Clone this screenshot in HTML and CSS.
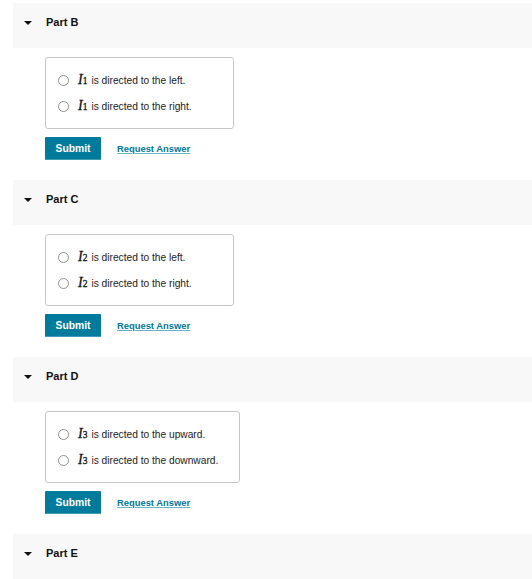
FILE: index.html
```html
<!DOCTYPE html>
<html>
<head>
<meta charset="utf-8">
<link rel="stylesheet" href="styles.css">
</head>
<body>
<div class="parts">
  <section class="part">
    <div class="part-head"><span class="caret"></span><span class="part-title">Part B</span></div>
    <div class="part-body">
      <div class="choices">
        <label class="choice"><span class="radio"></span><span class="math"><i>I</i><sub>1</sub></span><span class="ctext">is directed to the left.</span></label>
        <label class="choice"><span class="radio"></span><span class="math"><i>I</i><sub>1</sub></span><span class="ctext">is directed to the right.</span></label>
      </div>
      <div class="actions"><button class="submit">Submit</button><a class="request" href="#">Request Answer</a></div>
    </div>
  </section>
  <section class="part">
    <div class="part-head"><span class="caret"></span><span class="part-title">Part C</span></div>
    <div class="part-body">
      <div class="choices">
        <label class="choice"><span class="radio"></span><span class="math"><i>I</i><sub>2</sub></span><span class="ctext">is directed to the left.</span></label>
        <label class="choice"><span class="radio"></span><span class="math"><i>I</i><sub>2</sub></span><span class="ctext">is directed to the right.</span></label>
      </div>
      <div class="actions"><button class="submit">Submit</button><a class="request" href="#">Request Answer</a></div>
    </div>
  </section>
  <section class="part">
    <div class="part-head"><span class="caret"></span><span class="part-title">Part D</span></div>
    <div class="part-body">
      <div class="choices">
        <label class="choice"><span class="radio"></span><span class="math"><i>I</i><sub>3</sub></span><span class="ctext">is directed to the upward.</span></label>
        <label class="choice"><span class="radio"></span><span class="math"><i>I</i><sub>3</sub></span><span class="ctext">is directed to the downward.</span></label>
      </div>
      <div class="actions"><button class="submit">Submit</button><a class="request" href="#">Request Answer</a></div>
    </div>
  </section>
  <section class="part">
    <div class="part-head"><span class="caret"></span><span class="part-title">Part E</span></div>
  </section>
</div>
</body>
</html>
```
FILE: styles.css
```css
html, body {
  margin: 0;
  padding: 0;
  background: #ffffff;
}
body {
  font-family: "Liberation Sans", Arial, sans-serif;
  color: #1a1a1a;
}
.parts {
  padding-top: 3px;
  padding-left: 13px;
}
.part {
  margin-bottom: 20px;
}
.part-head {
  box-sizing: border-box;
  height: 45px;
  background: #f8f8f8;
  padding: 12px 0 0 11px;
  display: flex;
  align-items: flex-start;
}
.caret {
  width: 0;
  height: 0;
  border-left: 4.5px solid transparent;
  border-right: 4.5px solid transparent;
  border-top: 4px solid #111;
  margin-top: 6px;
}
.part-title {
  margin-left: 14px;
  font-size: 11px;
  font-weight: bold;
  line-height: 14px;
  color: #111;
}
.part-body {
  padding-left: 32px;
  padding-top: 9px;
}
.choices {
  display: inline-flex;
  flex-direction: column;
  box-sizing: border-box;
  min-width: 189px;
  border: 1px solid #c6c6c6;
  border-radius: 3px;
  padding: 9px 21px 9px 12px;
}
.choice {
  display: flex;
  align-items: center;
  height: 26px;
  font-size: 10.2px;
  color: #222;
}
.radio {
  box-sizing: border-box;
  width: 11px;
  height: 11px;
  border: 1px solid #8f8f8f;
  border-radius: 50%;
  background: #fff;
  flex: none;
}
.math {
  margin-left: 9px;
  font-family: "Liberation Serif", "Times New Roman", serif;
  font-size: 14px;
  color: #111;
  display: inline-flex;
  align-items: baseline;
  -webkit-text-stroke: 0.3px #111;
}
.math i {
  font-style: italic;
}
.math sub {
  font-size: 9.5px;
  vertical-align: -2px;
  line-height: 1;
  margin-left: 0;
}
.ctext {
  margin-left: 4px;
}
.actions {
  display: flex;
  align-items: center;
  margin-top: 8px;
}
.submit {
  box-sizing: border-box;
  width: 56px;
  height: 23px;
  border: none;
  border-radius: 1px;
  background: #007b9c;
  box-shadow: inset 0 -1px 0 #3d9ab3;
  color: #ffffff;
  font-family: "Liberation Sans", Arial, sans-serif;
  font-weight: bold;
  font-size: 10.3px;
  padding: 0;
}
.request {
  margin-left: 16px;
  font-size: 9.4px;
  font-weight: bold;
  color: #00789a;
  text-decoration: underline;
  text-decoration-color: #6bb4c8;
}
```
